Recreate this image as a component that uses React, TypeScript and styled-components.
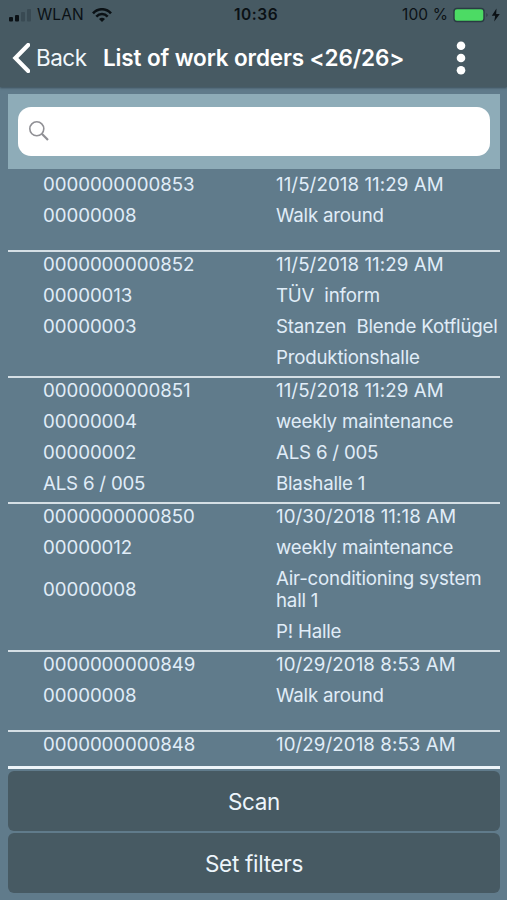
import React from "react";
import styled, { createGlobalStyle } from "styled-components";

const Global = createGlobalStyle`
  * { box-sizing: border-box; }
  body { margin: 0; background: #607b8b; font-family: Inter, Roboto, sans-serif; }
`;

const Screen = styled.div`
  width: 507px;
  height: 900px;
  display: flex;
  flex-direction: column;
  overflow: hidden;
  background: #607b8b;
  color: #e0edf8;
`;

const Header = styled.header`
  height: 87px;
  flex: none;
  background: #475a63;
  box-shadow: 0 1px 2px #3c505b;
`;

const StatusBar = styled.div`
  height: 30px;
  display: grid;
  grid-template-columns: 1fr auto 1fr;
  align-items: center;
  padding: 0 6px 0 8px;
  color: #0b1115;
  font-size: 15.5px;
  line-height: 30px;
`;

const StatusGroup = styled.div<{ $end?: boolean }>`
  display: flex;
  align-items: center;
  justify-content: ${(p) => (p.$end ? "flex-end" : "flex-start")};
`;

const Carrier = styled.span`
  margin: 0 8px 0 5px;
  letter-spacing: 0.1px;
`;

const Clock = styled.span`
  margin-left: 3px;
  font-weight: 600;
  letter-spacing: 0.55px;
`;

const Percent = styled.span`
  margin-right: 5px;
  letter-spacing: 0.1px;
`;

const NavBar = styled.div`
  height: 57px;
  display: flex;
  align-items: center;
  padding: 0 38px 2px 12px;
  color: #fff;
`;

const BackButton = styled.div`
  width: 91px;
  display: flex;
  align-items: center;
  gap: 6px;
  font-size: 22.5px;
  letter-spacing: -0.5px;
  color: #f1f7fb;
`;

const Title = styled.h1`
  flex: 1;
  margin: 0;
  font-size: 22.5px;
  font-weight: 600;
  letter-spacing: -0.13px;
  white-space: nowrap;
`;

const Content = styled.main`
  flex: 1;
  min-height: 0;
  display: flex;
  flex-direction: column;
  padding: 7px 7px 7px 8px;
`;

const SearchBar = styled.div`
  height: 75px;
  flex: none;
  padding: 13px 10px 13px;
  background: #8eacb8;
`;

const SearchField = styled.div`
  height: 49px;
  display: flex;
  align-items: center;
  padding: 0 11px 1px;
  border-radius: 13px;
  background: #fff;
`;

const List = styled.div`
  height: 598px;
  flex: none;
  overflow: hidden;
  padding-top: 2px;
`;

const Record = styled.section<{ $short?: boolean }>`
  display: grid;
  grid-template-columns: 233px 224px;
  row-gap: 9px;
  align-items: center;
  padding: 2px 0 ${(p) => (p.$short ? 23 : 7)}px 35px;
  border-bottom: 2px solid #d5dfe5;

  &:first-child { padding-top: 3px; }
`;

const Cell = styled.div<{ $spacing: number }>`
  min-height: 22px;
  font-size: 18.7px;
  line-height: 22px;
  letter-spacing: ${(p) => p.$spacing}px;
  white-space: pre;
`;

const Actions = styled.div`
  flex: none;
  display: flex;
  flex-direction: column;
  gap: 2px;
  margin-top: -1px;
  padding-top: 2px;
  border-top: 3px solid #edf4f9;
`;

const ActionButton = styled.button`
  height: 60px;
  border: 0;
  border-radius: 6px;
  background: #475a63;
  color: #edf5fb;
  font: 22.5px Inter, sans-serif;
  letter-spacing: -0.3px;
`;

const CODE_SPACING = -0.07;
const DATE_SPACING = 0.08;
const TEXT_SPACING = -0.2;

type Row = [string, string];
const records: { rows: Row[]; short?: boolean }[] = [
  { short: true, rows: [["0000000000853", "11/5/2018 11:29 AM"], ["00000008", "Walk around"]] },
  {
    rows: [
      ["0000000000852", "11/5/2018 11:29 AM"],
      ["00000013", "TÜV  inform"],
      ["00000003", "Stanzen  Blende Kotflügel"],
      ["", "Produktionshalle"],
    ],
  },
  {
    rows: [
      ["0000000000851", "11/5/2018 11:29 AM"],
      ["00000004", "weekly maintenance"],
      ["00000002", "ALS 6 / 005"],
      ["ALS 6 / 005", "Blashalle 1"],
    ],
  },
  {
    rows: [
      ["0000000000850", "10/30/2018 11:18 AM"],
      ["00000012", "weekly maintenance"],
      ["00000008", "Air-conditioning system\nhall 1"],
      ["", "P! Halle"],
    ],
  },
  { short: true, rows: [["0000000000849", "10/29/2018 8:53 AM"], ["00000008", "Walk around"]] },
  { short: true, rows: [["0000000000848", "10/29/2018 8:53 AM"]] },
];

const SignalIcon = () => (
  <svg width="24" height="15" viewBox="0 0 24 15">
    <rect x="1" y="9" width="4" height="4.5" rx="1" fill="#0b1115" />
    <rect x="7" y="7" width="4" height="6.5" rx="1" fill="#0b1115" />
    <rect x="13" y="4" width="4" height="9.5" rx="1" fill="#394a53" />
    <rect x="19" y="1" width="4" height="12.5" rx="1" fill="#394a53" />
  </svg>
);

const WifiIcon = () => (
  <svg width="20" height="14" viewBox="0 0 20 14" fill="none" stroke="#0b1115" strokeWidth="2.6">
    <path d="M1 5.3C6-.1 14-.1 19 5.3" />
    <path d="M4.3 8.6C7.6 5.2 12.4 5.2 15.7 8.6" />
    <path d="M7 11.1Q10 8.5 13 11.1L10 14Z" fill="#0b1115" stroke="none" />
  </svg>
);

const BatteryIcon = () => (
  <svg width="48" height="16" viewBox="0 0 48 16">
    <rect x="1" y="1.5" width="30" height="13" rx="3" fill="#4cdb64" stroke="#2a3b43" strokeWidth="1.4" />
    <path d="M33.5 6v4q2-2 0-4" fill="#26373f" />
    <path d="M43.5 1.5L38.8 8.8h3.4L41.2 14.5l5.6-7.6h-3.6z" fill="#0b1115" />
  </svg>
);

const BackIcon = () => (
  <svg width="18" height="30" viewBox="0 0 18 30" fill="none" stroke="#fff" strokeWidth="4.2">
    <path d="M16.2 2L3.4 15l12.8 13" strokeLinecap="round" />
  </svg>
);

const MoreIcon = () => (
  <svg width="16" height="34" viewBox="0 0 16 34" fill="#fff">
    <circle cx="8" cy="4.8" r="4.3" />
    <circle cx="8" cy="17" r="4.3" />
    <circle cx="8" cy="29.2" r="4.3" />
  </svg>
);

const SearchIcon = () => (
  <svg width="20" height="20" viewBox="0 0 20 20" fill="none" stroke="#909095">
    <circle cx="7.8" cy="7.8" r="7" strokeWidth="1.6" />
    <path d="M12.8 12.8L19 19" strokeWidth="2.2" />
  </svg>
);

export default function App() {
  return (
    <Screen>
      <Global />
      <Header>
        <StatusBar>
          <StatusGroup>
            <SignalIcon />
            <Carrier>WLAN</Carrier>
            <WifiIcon />
          </StatusGroup>
          <Clock>10:36</Clock>
          <StatusGroup $end>
            <Percent>100 %</Percent>
            <BatteryIcon />
          </StatusGroup>
        </StatusBar>
        <NavBar>
          <BackButton>
            <BackIcon />
            Back
          </BackButton>
          <Title>List of work orders &lt;26/26&gt;</Title>
          <MoreIcon />
        </NavBar>
      </Header>
      <Content>
        <SearchBar>
          <SearchField>
            <SearchIcon />
          </SearchField>
        </SearchBar>
        <List>
          {records.map((record, i) => (
            <Record key={i} $short={record.short}>
              {record.rows.map(([code, label], j) => (
                <React.Fragment key={j}>
                  <Cell $spacing={code.startsWith("ALS") ? TEXT_SPACING : CODE_SPACING}>{code}</Cell>
                  <Cell $spacing={j === 0 ? DATE_SPACING : TEXT_SPACING}>{label}</Cell>
                </React.Fragment>
              ))}
            </Record>
          ))}
        </List>
        <Actions>
          <ActionButton>Scan</ActionButton>
          <ActionButton>Set filters</ActionButton>
        </Actions>
      </Content>
    </Screen>
  );
}
